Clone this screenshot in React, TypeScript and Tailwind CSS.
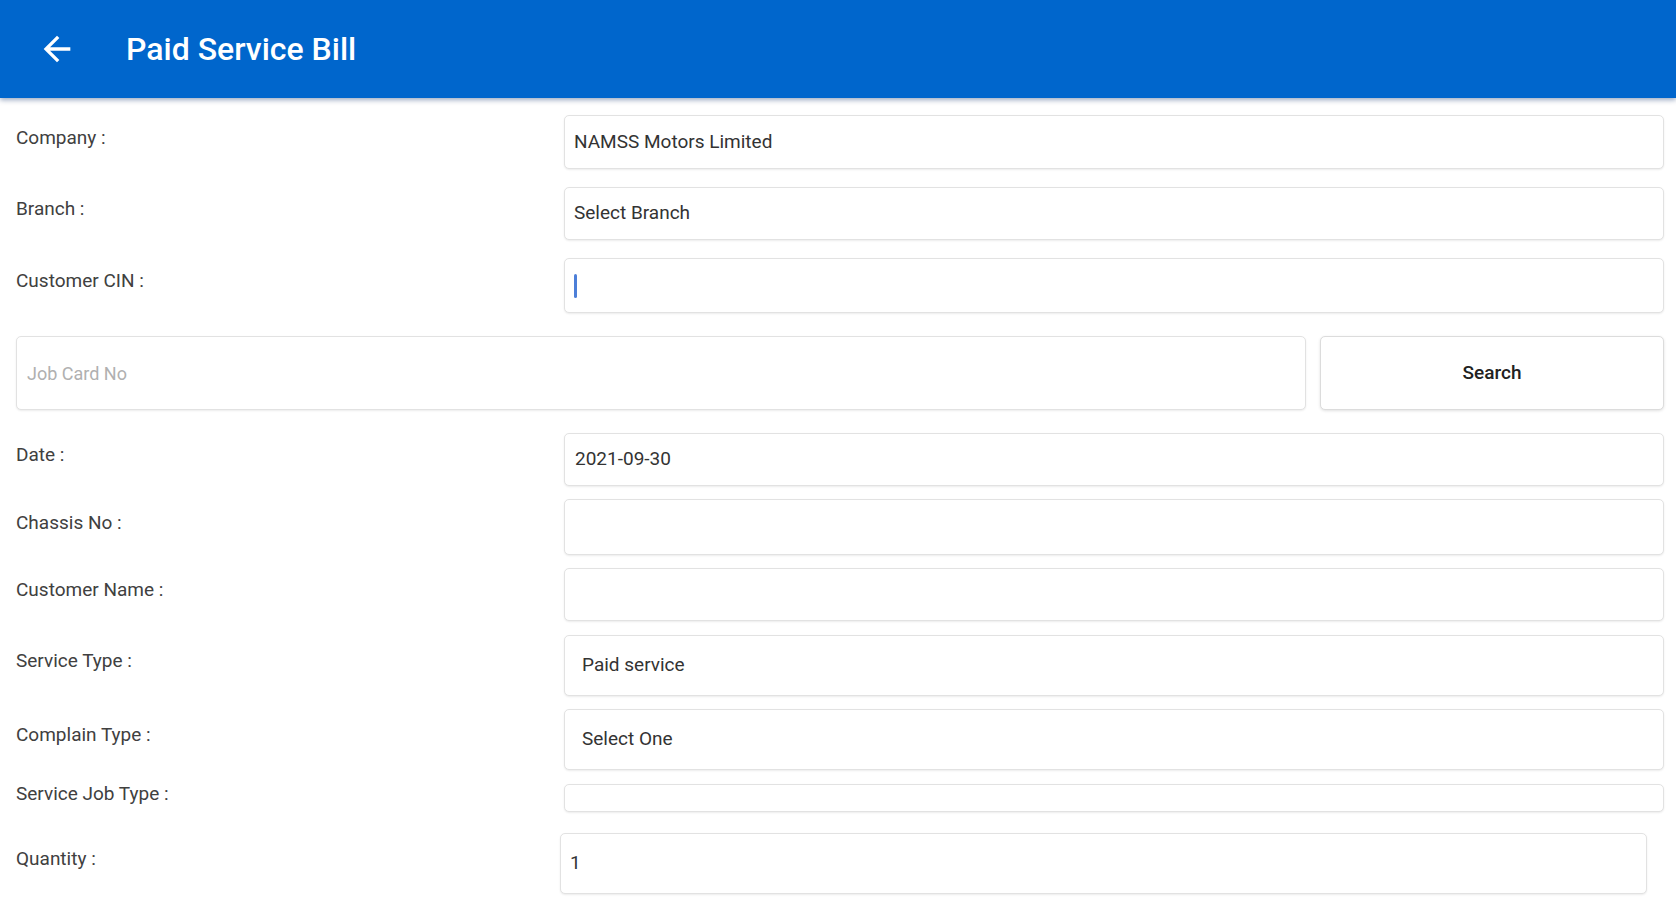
import React from 'react';

type Row = {
  label: string;
  value?: string;
  box: string; // full class list for the input box row wrapper
  text?: string;
  caret?: boolean;
};

const rows: Row[] = [
  { label: 'Company :', value: 'NAMSS Motors Limited', box: 'mt-[17px] h-[54px]', text: 'pl-[9px]' },
  { label: 'Branch :', value: 'Select Branch', box: 'mt-[18px] h-[53px]', text: 'pl-[9px]' },
  { label: 'Customer CIN :', box: 'mt-[18px] h-[55px]', text: 'pl-[9px]', caret: true },
];

const rows2: Row[] = [
  { label: 'Date :', value: '2021-09-30', box: 'mt-[23px] h-[53px]', text: 'pl-[10px]' },
  { label: 'Chassis No :', box: 'mt-[13px] h-[56px]', text: 'pl-[10px]' },
  { label: 'Customer Name :', box: 'mt-[13px] h-[53px]', text: 'pl-[10px]' },
  { label: 'Service Type :', value: 'Paid service', box: 'mt-[14px] h-[61px]', text: 'pl-[17px]' },
  { label: 'Complain Type :', value: 'Select One', box: 'mt-[13px] h-[61px]', text: 'pl-[17px]' },
  { label: 'Service Job Type :', box: 'mt-[14px] h-[28px]', text: 'pl-[17px]' },
];

const FieldRow: React.FC<{ row: Row }> = ({ row }) => (
  <div className={`flex items-center ${row.box}`}>
    <div className="w-[564px] shrink-0 pl-4 pb-2 text-[19px] text-[#404040]">{row.label}</div>
    <div
      className={`flex-1 mr-3 h-full flex items-center bg-white border border-[#e2e2e2] rounded-[5px] shadow-[0_1px_2px_rgba(0,0,0,0.08)] text-[19px] text-[#333333] ${row.text}`}
    >
      {row.caret ? <span className="w-[3px] h-[24px] bg-[#4d7fd8] rounded-sm" /> : row.value}
    </div>
  </div>
);

const ArrowBack = () => (
  <svg width="40" height="40" viewBox="0 0 24 24" fill="#ffffff">
    <path d="M20 11H7.83l5.59-5.59L12 4l-8 8 8 8 1.41-1.41L7.83 13H20v-2z" />
  </svg>
);

export default function App() {
  return (
    <div className="w-[1676px] h-[900px] overflow-hidden bg-white" style={{ fontFamily: 'Roboto, "Liberation Sans", sans-serif' }}>
      <header className="h-[98px] bg-[#0066cc] flex items-center shadow-[0_2px_5px_rgba(0,40,100,0.4)] relative z-10">
        <div className="w-[126px] pl-[37px] flex items-center">
          <ArrowBack />
        </div>
        <h1 className="text-white text-[32px] font-medium">Paid Service Bill</h1>
      </header>

      <main>
        {rows.map((r) => (
          <FieldRow key={r.label} row={r} />
        ))}

        <div className="flex mt-[23px] h-[74px] pl-4 pr-3 gap-[14px]">
          <div className="flex-1 flex items-center pl-[10px] bg-white border border-[#e2e2e2] rounded-[5px] shadow-[0_1px_2px_rgba(0,0,0,0.08)] text-[18px] text-[#b0b0b0]">
            Job Card No
          </div>
          <button className="w-[344px] flex items-center justify-center bg-white border border-[#dcdcdc] rounded-[5px] shadow-[0_1px_3px_rgba(0,0,0,0.12)] text-[19px] font-medium text-[#222]">
            Search
          </button>
        </div>

        {rows2.map((r) => (
          <FieldRow key={r.label} row={r} />
        ))}

        <div className="flex items-center mt-[21px] h-[61px]">
          <div className="w-[560px] shrink-0 pl-4 pb-2 text-[19px] text-[#404040]">Quantity :</div>
          <div className="w-[1087px] h-full flex items-center pl-[9px] bg-white border border-[#e2e2e2] rounded-[5px] shadow-[0_1px_2px_rgba(0,0,0,0.08)] text-[19px] text-[#333333]">
            1
          </div>
        </div>
      </main>
    </div>
  );
}
